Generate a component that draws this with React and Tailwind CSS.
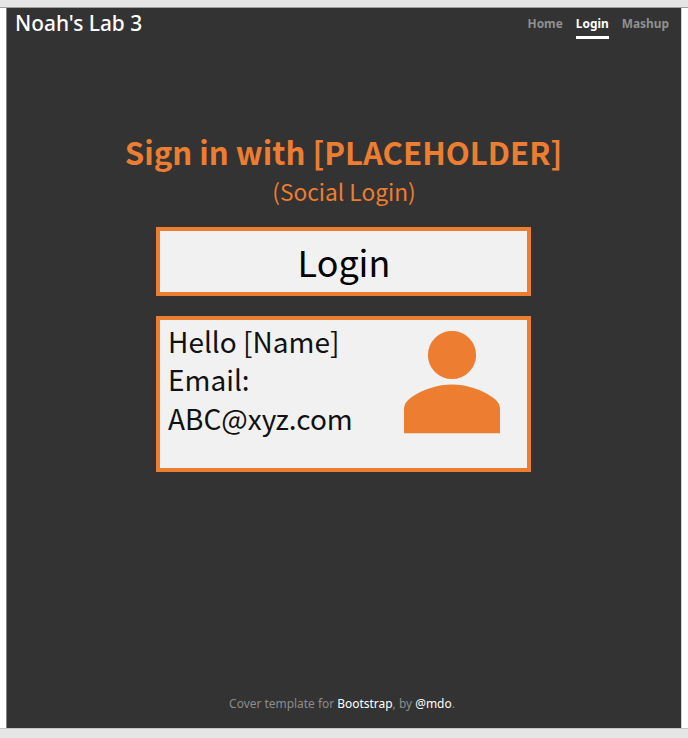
const ui = "font-['Noto_Sans',sans-serif]";

function NavItem({ label, className }) {
  return (
    <a className={`block h-[25px] border-b-3 text-[11.9px] leading-[18px] font-bold whitespace-nowrap ${className}`}>
      {label}
    </a>
  );
}

function PersonIcon() {
  return (
    <svg width="96" height="103" viewBox="0 0 96 103" fill="#ed7d31" aria-hidden="true">
      <circle cx="48" cy="24" r="24.1" />
      <path d="M0 102.3V78Q0 71.500 6.500 67C32 49 64 49 89.500 67Q96 71.500 96 78V102.300Z" />
    </svg>
  );
}

export default function App() {
  return (
    <div className="h-[738px] w-[688px] overflow-hidden bg-white">
      <div className="h-[8px] border-b border-[#a0a0a0] bg-[#e6e6e6]" />
      <div className={`ml-[6px] flex h-[720px] w-[676px] flex-col border-x border-l-[#858585] border-r-[#d0d0d0] bg-[#333333] ${ui}`}>
        <header className="flex h-[60px] justify-between pr-[12px] pl-[8px]">
          <h1 className="text-[20.9px] leading-[30px] font-medium whitespace-nowrap text-white">Noah's Lab 3</h1>
          <nav className="flex gap-[13px] pt-[6px]">
            <NavItem label="Home" className="border-transparent text-[#909090]" />
            <NavItem label="Login" className="border-white text-white" />
            <NavItem label="Mashup" className="border-transparent text-[#909090]" />
          </nav>
        </header>
        <main className="flex flex-1 flex-col items-center pt-[64px] pr-[2px] font-['Noto_Sans_CJK_SC',sans-serif]">
          <h2 className="h-[42px] pl-[1px] text-[31.2px] leading-[40px] font-bold whitespace-nowrap text-[#ed7d31]">Sign in with [PLACEHOLDER]</h2>
          <p className="h-[53px] pt-[2px] pl-[2px] text-[22.7px] leading-[32px] whitespace-nowrap text-[#ed7d31]">(Social Login)</p>
          <button className="h-[69px] w-[375px] border-4 border-[#ed7d31] bg-[#f1f1f1] pb-[1px] pl-[2px] text-[35.9px] leading-[58px] text-black">Login</button>
          <section className="mt-[20px] flex h-[156px] w-[375px] justify-between border-4 border-[#ed7d31] bg-[#f1f1f1] pt-[2px] pr-[27px] pl-[8.5px] text-[28px] leading-[38.4px] text-[#111111]">
            <div className="whitespace-nowrap">
              <p>Hello [Name]</p>
              <p>Email:</p>
              <p>ABC@xyz.com</p>
            </div>
            <div className="pt-[9px]">
              <PersonIcon />
            </div>
          </section>
        </main>
        <footer className="h-[35px] pr-[4px] text-center text-[11.95px] leading-[21px] text-[#8c8c8c]">
          Cover template for <a className="text-white">Bootstrap</a>, by <a className="text-white">@mdo</a>.
        </footer>
      </div>
      <div className="h-[10px] border-t border-[#c4c4c4] bg-[#e6e6e6]" />
    </div>
  );
}
